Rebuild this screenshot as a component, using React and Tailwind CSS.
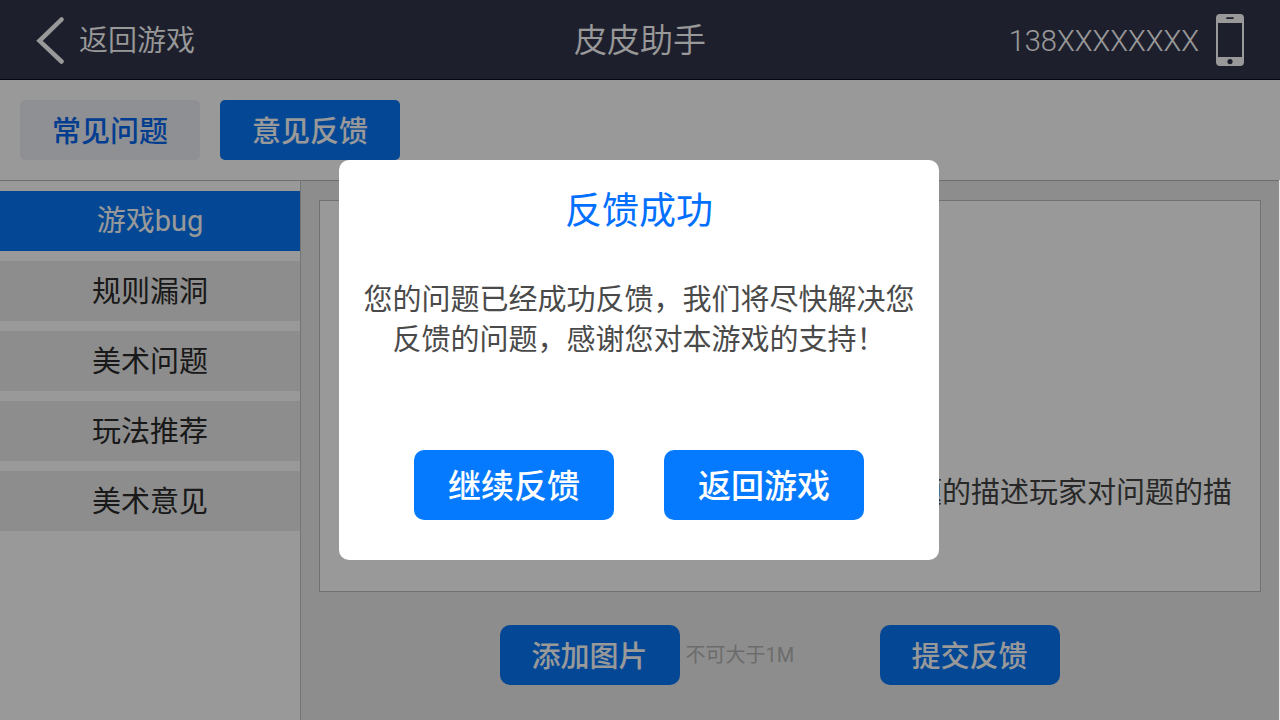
// src/App.jsx
import React, { useState } from "react";

const CATEGORIES = ["游戏bug", "规则漏洞", "美术问题", "玩法推荐", "美术意见"];

function BackIcon() {
  return (
    <svg width="28" height="48" viewBox="0 0 28 48" fill="none" aria-hidden="true">
      <path
        d="M25.5 3.5 3.5 24.8l22 20.7"
        stroke="currentColor"
        strokeWidth="4.5"
        strokeLinecap="round"
        strokeLinejoin="miter"
      />
    </svg>
  );
}

function PhoneIcon() {
  return (
    <svg width="28" height="52" viewBox="0 0 28 52" aria-hidden="true">
      <path
        fill="currentColor"
        fillRule="evenodd"
        d="M4 0h20a4 4 0 0 1 4 4v44a4 4 0 0 1-4 4H4a4 4 0 0 1-4-4V4a4 4 0 0 1 4-4ZM2 9v34h24V9H2ZM11 3.2a.9.9 0 0 0 0 1.8h6a.9.9 0 0 0 0-1.8h-6ZM14 45a2.6 2.6 0 1 0 0 5.2 2.6 2.6 0 0 0 0-5.2Z"
      />
    </svg>
  );
}

function Header() {
  return (
    <header className="grid grid-cols-3 items-center h-20 px-9 bg-[#32354b] border-b border-[#0a0a20] text-white font-[350]">
      <button className="flex items-center gap-[15px] justify-self-start">
        <BackIcon />
        <span className="pt-[3px]">返回游戏</span>
      </button>
      <h1 className="pt-[3px] text-center text-[33px] leading-10">皮皮助手</h1>
      <div className="flex items-center justify-end gap-[17px]">
        <span className="pt-[3px] font-light">138XXXXXXXX</span>
        <PhoneIcon />
      </div>
    </header>
  );
}

function SuccessModal({ onClose }) {
  return (
    <div className="fixed inset-0 z-40 bg-black/40 flex items-center justify-center pr-0.5">
      <div className="absolute right-0 top-[180px] bottom-0 w-px bg-gray-200" />
      <div
        role="dialog"
        aria-labelledby="modal-title"
        className="w-[600px] max-w-full bg-white rounded-[10px] px-6 pt-8 pb-10 text-center"
      >
        <h2 id="modal-title" className="text-[37px] leading-10 text-[#0270ff]">
          反馈成功
        </h2>
        <p className="mt-12 leading-10 text-[#4a4a4a]">
          您的问题已经成功反馈，我们将尽快解决您
          <br />
          反馈的问题，感谢您对本游戏的支持！
        </p>
        <div className="mt-[90px] flex justify-center gap-[50px] text-[33px] leading-10 text-white font-medium">
          <button
            className="w-[200px] h-[70px] pt-[3px] rounded-[10px] bg-[#057aff]"
            onClick={onClose}
          >
            继续反馈
          </button>
          <button
            className="w-[200px] h-[70px] pt-[3px] rounded-[10px] bg-[#057aff]"
            onClick={onClose}
          >
            返回游戏
          </button>
        </div>
      </div>
    </div>
  );
}

export default function App() {
  const [category, setCategory] = useState(CATEGORIES[0]);
  const [modalOpen, setModalOpen] = useState(true);

  return (
    <div className="min-h-screen flex flex-col bg-white font-['Roboto','Noto_Sans_CJK_SC',sans-serif] text-[29px] leading-10">
      <Header />

      <nav className="flex gap-5 p-5 border-b border-[#b8b8b8] font-medium">
        <button className="w-[180px] h-[60px] pt-[3px] rounded-[5px] bg-[#eef1f5] text-[#0566f0]">
          常见问题
        </button>
        <button className="w-[180px] h-[60px] pt-[3px] rounded-[5px] bg-[#0878f8] text-white">
          意见反馈
        </button>
      </nav>

      <div className="flex flex-1">
        <aside className="w-[301px] shrink-0 border-r border-[#c4c4c4] pt-2.5 flex flex-col gap-2.5">
          {CATEGORIES.map((name) => (
            <button
              key={name}
              onClick={() => setCategory(name)}
              className={
                name === category
                  ? "h-[60px] bg-[#0878f8] text-white"
                  : "h-[60px] pt-px bg-[#ebebeb] text-[#2a2a2a]"
              }
            >
              {name}
            </button>
          ))}
        </aside>

        <main className="flex-1 min-w-0 bg-[#ebebeb] pl-[18px] pr-[19px] pt-[19px]">
          <textarea
            aria-label="问题描述"
            className="block w-full h-[392px] resize-none border border-[#bcbcbc] bg-white pt-[272px] pl-5 pr-7 text-right text-[#444]"
            defaultValue="对问题的描述玩家对问题的描述玩家对问题的描述玩家对问题的描"
          />
          <div className="mt-[33px] pr-[21px] flex justify-center">
            <div className="w-[380px] flex items-center gap-1.5">
              <button className="w-[180px] h-[60px] pt-[3px] rounded-[10px] bg-[#0878f8] text-white font-medium">
                添加图片
              </button>
              <span className="text-xl text-[#b4b4b4]">不可大于1M</span>
            </div>
            <button className="w-[180px] h-[60px] pt-[3px] rounded-[10px] bg-[#0878f8] text-white font-medium">
              提交反馈
            </button>
          </div>
        </main>
      </div>

      {modalOpen && <SuccessModal onClose={() => setModalOpen(false)} />}
    </div>
  );
}
